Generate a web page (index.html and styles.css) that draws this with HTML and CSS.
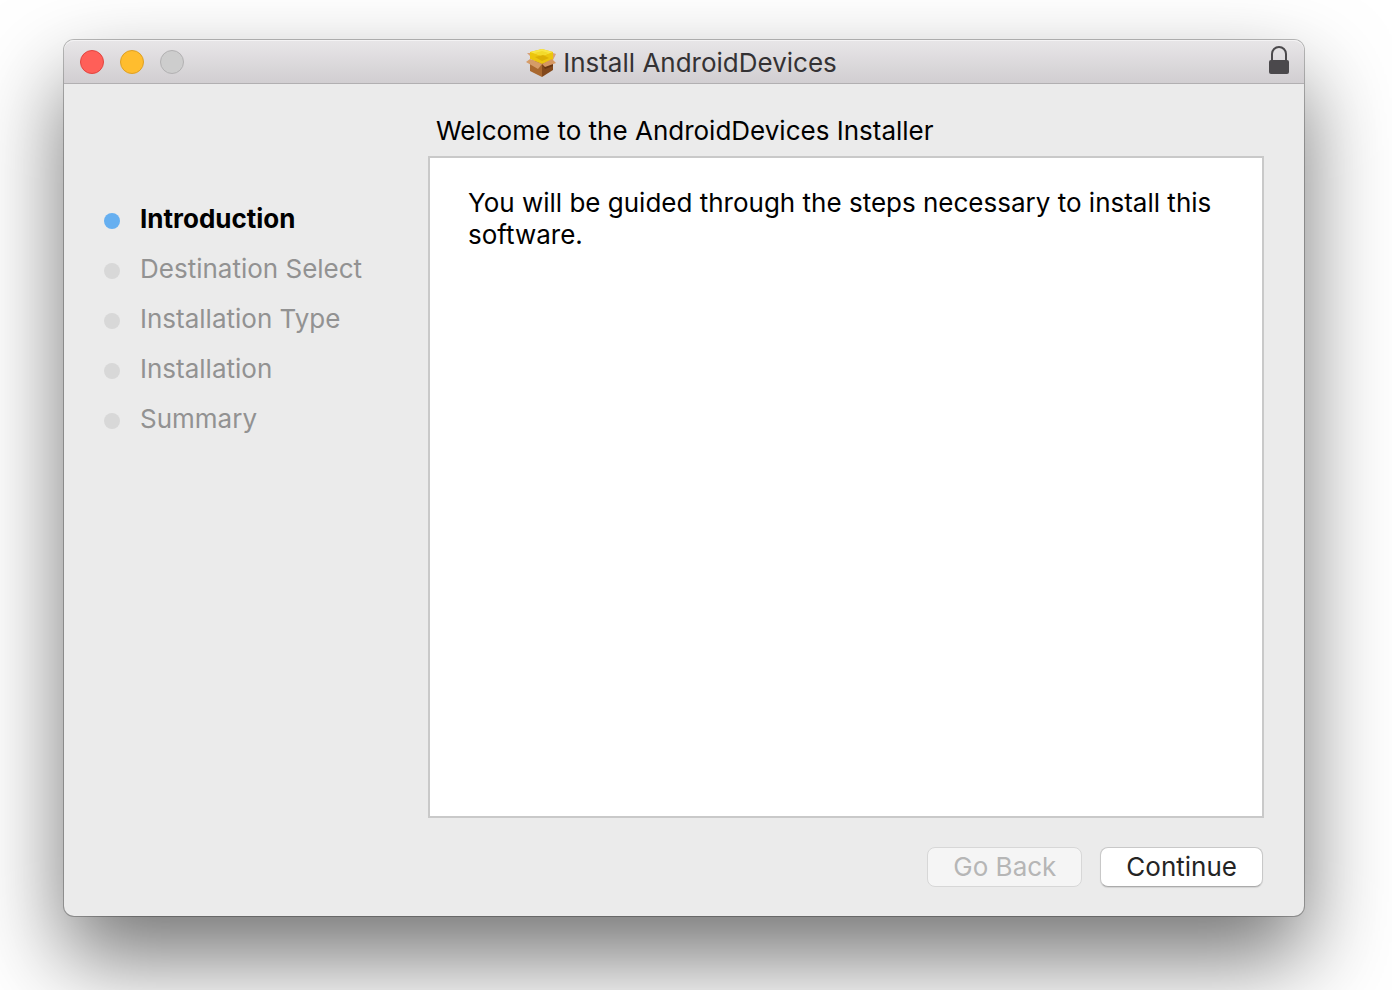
FILE: index.html
```html
<!DOCTYPE html>
<html lang="en">
<head>
<meta charset="utf-8">
<meta name="viewport" content="width=device-width, initial-scale=1">
<title>Install AndroidDevices</title>
<link rel="stylesheet" href="styles.css">
</head>
<body>
<main class="window">
  <header class="titlebar">
    <div class="lights">
      <button class="light light-close" type="button" aria-label="Close"></button>
      <button class="light light-minimize" type="button" aria-label="Minimize"></button>
      <button class="light light-zoom" type="button" aria-label="Zoom" disabled></button>
    </div>
    <div class="title">
      <svg class="package" viewBox="0 0 32 30" aria-hidden="true">
        <path d="M5 12L17 14V29L5 23Z" fill="#a9682f"/>
        <path d="M17 14L28 12V22L17 29Z" fill="#83491c"/>
        <path d="M17 16L28 14V18L20 21Z" fill="#683612"/>
        <path d="M5 8L2 5L5 5ZM28 5L31 6L28 12Z" fill="#d8a077"/>
        <path d="M5 4L17 1L28 4V12L17 16L5 11Z" fill="#ecc50d"/>
        <path d="M5 4L17 1L28 4L17 8Z" fill="#f9e648"/>
        <path d="M9 5L17 3L24 5L17 8Z" fill="#f3da2b"/>
        <path d="M10 9L18 7L24 10L17 13Z" fill="#dcae05"/>
        <path d="M5 11L17 16L13 21L1 14Z" fill="#d59c68"/>
        <path d="M17 16L27 11L31 15L20 19Z" fill="#d59761"/>
      </svg>
      <h1 class="title-text">Install AndroidDevices</h1>
    </div>
    <button class="lock" type="button" aria-label="Certificate">
      <svg class="lock-icon" viewBox="0 0 22 30" aria-hidden="true">
        <path d="M4 15V9A7 7 0 0 1 18 9V15" fill="none" stroke="#4b494c" stroke-width="2"/>
        <rect x="1" y="15" width="20" height="14" rx="2" fill="#4b494c"/>
      </svg>
    </button>
  </header>
  <div class="body">
    <nav class="sidebar" aria-label="Installation steps">
      <ol class="steps">
        <li class="step step-current" aria-current="step">Introduction</li>
        <li class="step">Destination Select</li>
        <li class="step">Installation Type</li>
        <li class="step">Installation</li>
        <li class="step">Summary</li>
      </ol>
    </nav>
    <section class="content">
      <h2 class="heading">Welcome to the AndroidDevices Installer</h2>
      <div class="panel">
        <p class="message">You will be guided through the steps necessary to install this software.</p>
      </div>
      <footer class="actions">
        <button class="button button-back" type="button" disabled>Go Back</button>
        <button class="button button-continue" type="button">Continue</button>
      </footer>
    </section>
  </div>
</main>
</body>
</html>
```
FILE: styles.css
```css
* {
  box-sizing: border-box;
}

body {
  display: flex;
  min-height: 100vh;
  margin: 0;
  padding: 40px 88px 74px 64px;
  overflow: hidden;
  background: #fff;
  color: #000;
  font-family: Inter, "Liberation Sans", sans-serif;
  font-size: 26px;
  line-height: 32px;
}

button {
  margin: 0;
  padding: 0;
  font: inherit;
}

.window {
  display: flex;
  flex: 1;
  flex-direction: column;
  border-radius: 10px;
  background: #ebebeb;
  box-shadow: 0 0 0 1px rgba(0, 0, 0, 0.26), 0 42px 88px rgba(0, 0, 0, 0.55);
}

.titlebar {
  display: grid;
  grid-template-columns: 1fr auto 1fr;
  align-items: center;
  height: 44px;
  padding: 0 14px 0 16px;
  border-bottom: 1px solid #b1afb1;
  border-radius: 10px 10px 0 0;
  background: linear-gradient(#e8e6e8, #d1ced1);
  box-shadow: inset 0 1px #f4f3f4;
}

.lights {
  display: flex;
  gap: 16px;
}

.light {
  width: 24px;
  height: 24px;
  border: 1px solid;
  border-radius: 50%;
}

.light-close {
  border-color: #e2453f;
  background: #ff5f58;
}

.light-minimize {
  border-color: #dea024;
  background: #ffbd2e;
}

.light-zoom {
  border-color: #b2b1b2;
  background: #cdcdcd;
}

.title {
  display: flex;
  align-items: center;
  gap: 6px;
  padding: 2px 8px 0 0;
}

.package {
  width: 32px;
  height: 30px;
}

.title-text {
  margin: 0;
  color: #343234;
  font-size: 26px;
  font-weight: 400;
}

.lock {
  align-self: start;
  justify-self: end;
  width: 22px;
  height: 30px;
  margin-top: 5px;
  border: 0;
  background: none;
}

.lock-icon {
  display: block;
  width: 22px;
  height: 30px;
}

.body {
  display: grid;
  flex: 1;
  grid-template-columns: 364px 1fr;
}

.sidebar {
  padding: 119px 0 0 40px;
}

.steps {
  display: grid;
  gap: 18px;
  margin: 0;
  padding: 0;
  list-style: none;
}

.step {
  display: flex;
  align-items: center;
  gap: 20px;
  color: #929292;
}

.step::before {
  width: 16px;
  height: 16px;
  margin-top: 4px;
  border-radius: 50%;
  background: #d8d8d8;
  content: "";
}

.step-current {
  color: #000;
  font-weight: 700;
}

.step-current::before {
  background: #66aff0;
}

.content {
  display: flex;
  flex-direction: column;
  padding: 31px 40px 29px 0;
}

.heading {
  margin: 0 0 9px 8px;
  font-size: 26px;
  font-weight: 400;
}

.panel {
  flex: 1;
  padding: 29px 38px;
  border: 2px solid #c9c9c9;
  background: #fff;
}

.message {
  margin: 0;
}

.actions {
  display: flex;
  justify-content: flex-end;
  gap: 18px;
  padding: 29px 1px 0 0;
}

.button {
  height: 40px;
  padding: 0 25px;
  border: 1px solid #c8c8c8;
  border-radius: 8px;
}

.button-back {
  border-color: #d7d7d7;
  background: #f5f5f5;
  color: #b6b6b6;
}

.button-continue {
  border-bottom-color: #ababab;
  background: #fff;
  box-shadow: 0 1px 1px rgba(0, 0, 0, 0.1);
  color: #242424;
}
```
